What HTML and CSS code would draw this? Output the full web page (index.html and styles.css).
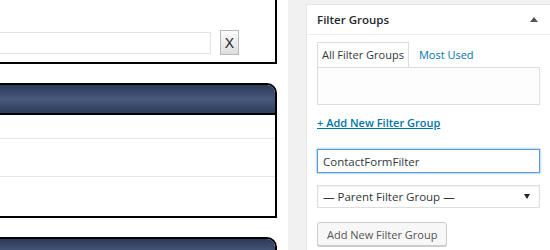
FILE: index.html
```html
<!DOCTYPE html>
<html lang="en">
<head>
  <meta charset="UTF-8">
  <title>Filter Groups</title>
  <link rel="stylesheet" href="styles.css">
</head>
<body>
  <div class="page">
    <div class="main">
      <div class="panel panel-top">
        <div class="search-row">
          <input type="text" class="search-input">
          <button class="clear-btn">X</button>
        </div>
      </div>
      <div class="panel panel-list">
        <div class="panel-head"></div>
        <div class="list-row row-1"></div>
        <div class="list-row row-2"></div>
        <div class="list-row row-3"></div>
      </div>
      <div class="panel panel-list">
        <div class="panel-head"></div>
      </div>
    </div>

    <div class="side">
      <div class="postbox">
        <div class="postbox-head">
          <h2>Filter Groups</h2>
          <span class="toggle"></span>
        </div>
        <div class="postbox-body">
          <ul class="tabs">
            <li class="tab active">All Filter Groups</li>
            <li class="tab"><a href="#">Most Used</a></li>
          </ul>
          <div class="tab-panel"></div>
          <a href="#" class="add-link">+ Add New Filter Group</a>
          <input type="text" class="name-input" value="ContactFormFilter">
          <div class="parent-select">
            <span>— Parent Filter Group —</span>
            <span class="caret"></span>
          </div>
          <button class="add-btn">Add New Filter Group</button>
        </div>
      </div>
    </div>
  </div>
</body>
</html>
```

FILE: styles.css
```css
* { box-sizing: border-box; }
body { margin: 0; font-family: "Open Sans", "Noto Sans", sans-serif; background: #fff; }
.page { display: flex; height: 250px; overflow: hidden; }

/* left column */
.main { width: 288px; flex-shrink: 0; background: #fff; overflow: hidden; }
.panel { width: 307px; margin-left: -30px; border: 2px solid #000; background: #fff; }
.panel-top { height: 84px; margin-top: -20px; padding: 48px 36px 0 0; }
.search-row { display: flex; align-items: center; gap: 9px; }
.search-input { flex: 1; height: 22px; border: 1px solid #e2e2e2; margin: 0; }
.clear-btn { width: 19px; height: 25px; padding: 0; border: 1px solid #b9b9b9; background: linear-gradient(#fbfbfb, #dedede); font: 14px "Liberation Sans", sans-serif; color: #222; }
.panel-list { margin-top: 19px; border-top-right-radius: 10px; overflow: hidden; }
.panel-head { height: 30px; border-bottom: 2px solid #000; background: linear-gradient(#2c3a57, #48597e 50%, #2d3c5a); }
.list-row { border-bottom: 1px solid #e6e6e6; }
.row-1 { height: 24px; }
.row-2 { height: 38px; }
.row-3 { height: 39px; border-bottom: none; }

/* right column */
.side { flex: 1; background: #f1f1f1; padding: 4px 0 0 18px; }
.postbox { background: #fff; border: 1px solid #e5e5e5; border-right: none; height: 260px; box-shadow: 0 1px 1px rgba(0,0,0,.04); }
.postbox-head { display: flex; justify-content: space-between; align-items: center; height: 30px; padding: 0 12px 0 10px; border-bottom: 1px solid #eee; }
.postbox-head h2 { margin: 0; font-size: 11.5px; font-weight: 600; color: #23282d; }
.toggle { width: 0; height: 0; border-left: 4px solid transparent; border-right: 4px solid transparent; border-bottom: 5px solid #555; }
.postbox-body { padding: 7px 10px 0 10px; }
.tabs { list-style: none; margin: 0; padding: 0; display: flex; font-size: 11px; }
.tab { height: 25px; line-height: 23px; padding: 0 4px; margin-right: 5px; border: 1px solid transparent; border-bottom: none; }
.tab.active { border-color: #ddd; background: #fff; color: #32373c; position: relative; margin-bottom: -1px; }
.tab a { color: #0073aa; text-decoration: none; }
.tab-panel { height: 38px; border: 1px solid #ddd; background: #fdfdfd; }
.add-link { display: block; width: max-content; margin-top: 10px; line-height: 16px; font-size: 11px; font-weight: 600; color: #0073aa; }
.name-input { display: block; width: 100%; height: 24px; margin-top: 18px; padding: 0 5px; font: 11.5px "Open Sans", sans-serif; color: #32373c; border: 1px solid #5b9dd9; box-shadow: 0 0 2px rgba(30,140,190,.8); outline: none; }
.parent-select { display: flex; justify-content: space-between; align-items: center; height: 23px; margin-top: 12px; padding: 0 9px 0 5px; border: 1px solid #ddd; font-size: 11.5px; color: #32373c; box-shadow: inset 0 1px 2px rgba(0,0,0,.07); }
.caret { width: 0; height: 0; border-left: 3px solid transparent; border-right: 3px solid transparent; border-top: 5px solid #222; }
.add-btn { display: block; margin-top: 14px; height: 24px; padding: 0 9px; background: #f7f7f7; border: 1px solid #ccc; border-radius: 3px; box-shadow: 0 1px 0 #ccc; font: 11px "Open Sans", sans-serif; color: #555; }
```
